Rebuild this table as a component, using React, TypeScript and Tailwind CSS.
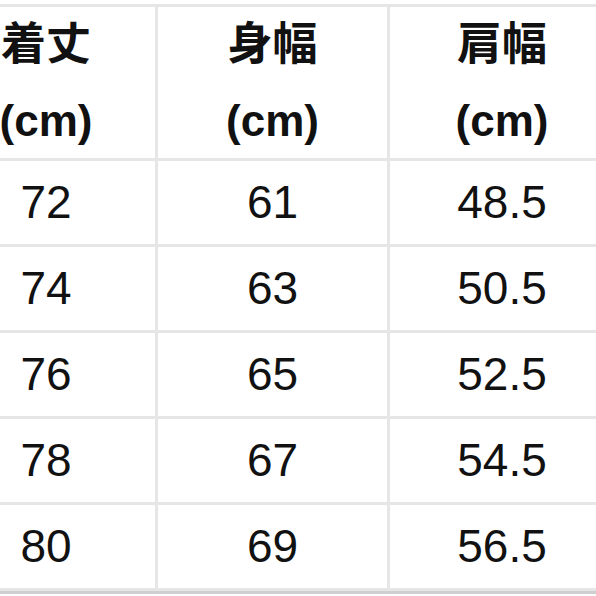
import React from 'react';

const headers = ['着丈', '身幅', '肩幅'];

const rows = [
  ['72', '61', '48.5'],
  ['74', '63', '50.5'],
  ['76', '65', '52.5'],
  ['78', '67', '54.5'],
  ['80', '69', '56.5'],
];

const App: React.FC = () => {
  return (
    <div
      className="w-[596px] h-[596px] overflow-hidden bg-white"
      style={{ fontFamily: '"Liberation Sans", "Noto Sans CJK JP", sans-serif' }}
    >
      <div className="mt-[4px] ml-[-66px] w-max grid grid-cols-[218px_229px_224px] gap-[3px] p-[3px] bg-[#e6e6e6] border-b-[3px] border-[#cfcfcf]">
        {headers.map((h) => (
          <div
            key={h}
            className="h-[151px] bg-white flex flex-col items-center justify-center text-[#111] font-bold"
          >
            <span className="text-[45px] leading-[76px]">{h}</span>
            <span className="text-[44px] leading-[76px]">(cm)</span>
          </div>
        ))}
        {rows.map((r, i) =>
          r.map((v, j) => (
            <div
              key={`${i}-${j}`}
              className="h-[83px] bg-white flex items-center justify-center text-[46px] text-[#111]"
            >
              {v}
            </div>
          ))
        )}
      </div>
    </div>
  );
};

export default App;
